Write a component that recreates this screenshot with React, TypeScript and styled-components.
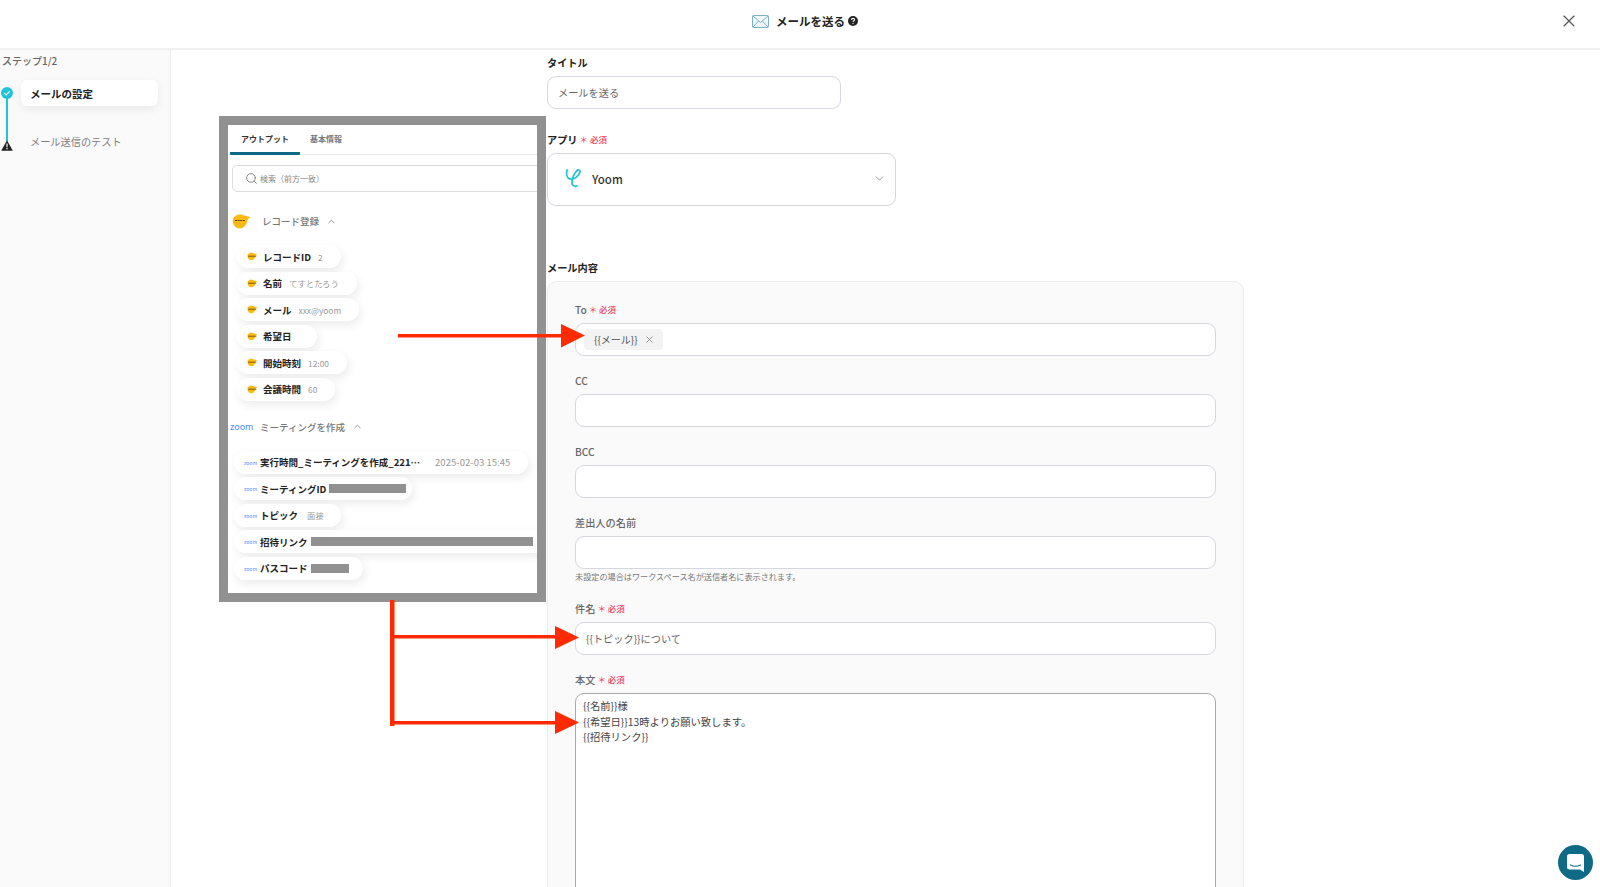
import styled, { createGlobalStyle } from "styled-components";
import { ChevronDown, ChevronUp, Search, X } from "lucide-react";

const GlobalStyle = createGlobalStyle`
  html, body {
    margin: 0;
    padding: 0;
    background: #fff;
    font-family: "Noto Sans CJK JP", "Noto Sans", sans-serif;
    color: #222;
  }
  * {
    box-sizing: border-box;
  }
`;

const Page = styled.div`
  position: relative;
  width: 1600px;
  height: 887px;
  overflow: hidden;
  display: flex;
  flex-direction: column;
`;

const Header = styled.header`
  position: relative;
  height: 50px;
  flex: none;
  display: flex;
  align-items: center;
  justify-content: center;
  padding: 0 0 6px 10px;
  border-bottom: 2px solid #f1f1f1;
`;

const HeaderTitle = styled.h1`
  margin: 0 0 0 7px;
  font-size: 11.5px;
  font-weight: 700;
  color: #222;
`;

const CloseButton = styled.button`
  position: absolute;
  right: 21px;
  top: 11px;
  padding: 0;
  border: 0;
  background: none;
  color: #555;
  display: flex;
`;

const Body = styled.div`
  flex: 1;
  display: flex;
  min-height: 0;
`;

const Sidebar = styled.aside`
  width: 171px;
  flex: none;
  padding: 3px 12px 0 2px;
  background: #fafafa;
  border-right: 1px solid #ececec;
`;

const StepCount = styled.div`
  font-size: 10px;
  line-height: 16px;
  font-weight: 500;
  color: #666;
  margin-bottom: 11px;
`;

const StepList = styled.div`
  position: relative;
  display: flex;
  flex-direction: column;
  gap: 22px;
  padding-left: 19px;
`;

const StepRail = styled.div`
  position: absolute;
  left: 4px;
  top: 15px;
  width: 2px;
  height: 46px;
  background: #1fc4d9;
`;

const StepDot = styled.span`
  position: absolute;
  left: -1px;
  top: 7px;
  display: flex;
`;

const StepWarn = styled.span`
  position: absolute;
  left: -1px;
  top: 60px;
  display: flex;
`;

const Step = styled.div<{ $active?: boolean }>`
  height: ${(p) => (p.$active ? "26px" : "27px")};
  display: flex;
  align-items: center;
  padding-left: 9px;
  border-radius: 6px;
  font-size: ${(p) => (p.$active ? "10.5px" : "10.2px")};
  font-weight: ${(p) => (p.$active ? 700 : 400)};
  color: ${(p) => (p.$active ? "#222" : "#808080")};
  background: ${(p) => (p.$active ? "#fff" : "transparent")};
  box-shadow: ${(p) => (p.$active ? "0 3px 10px rgba(0,0,0,0.07)" : "none")};
`;

const Main = styled.main`
  flex: 1;
  padding: 4px 0 0 376px;
`;

const Label = styled.label<{ $muted?: boolean }>`
  display: flex;
  align-items: center;
  height: 16px;
  margin-bottom: 6px;
  font-size: 10.2px;
  font-weight: ${(p) => (p.$muted ? 500 : 700)};
  color: ${(p) => (p.$muted ? "#666" : "#222")};
`;

const Required = styled.span`
  margin-left: 2px;
  font-size: 8.5px;
  font-weight: 500;
  color: #f0405c;
`;

const Field = styled.div`
  margin-bottom: 16px;
`;

const TitleField = styled(Field)`
  width: 294px;
  margin-bottom: 22px;
`;

const Input = styled.div`
  display: flex;
  align-items: center;
  height: 33px;
  padding: 0 10px;
  background: #fff;
  border: 1px solid #d4d8de;
  border-radius: 9px;
  font-size: 10.2px;
  color: #666;
`;

const SelectBox = styled.div`
  display: flex;
  align-items: center;
  width: 349px;
  height: 53px;
  margin-bottom: 53px;
  padding: 0 9px 2px 17px;
  background: #fff;
  border: 1px solid #d4d8de;
  border-radius: 9px;
  font-size: 11.5px;
  font-weight: 500;
  color: #333;
`;

const SelectName = styled.span`
  flex: 1;
  margin-left: 10px;
`;

const ContentPanel = styled.section`
  width: 697px;
  height: 700px;
  padding: 19px 27px 0;
  background: #fafafa;
  border: 1px solid #ececec;
  border-radius: 10px;
`;

const Tag = styled.span`
  display: flex;
  align-items: center;
  gap: 6px;
  height: 21px;
  margin-left: -2px;
  padding: 0 8px 0 10px;
  background: #f3f3f3;
  border-radius: 4px;
  font-size: 10px;
  color: #555;
`;

const Hint = styled.div`
  height: 16px;
  margin-bottom: 15px;
  font-size: 8.15px;
  line-height: 16px;
  color: #777;
`;

const BodyText = styled.div`
  height: 400px;
  padding: 4px 7px;
  background: #fff;
  border: 1px solid #aaa;
  border-radius: 9px 9px 0 0;
  font-size: 10.3px;
  line-height: 15.5px;
  color: #444;
`;

const Shot = styled.div`
  position: absolute;
  left: 219px;
  top: 116px;
  width: 327px;
  height: 486px;
  padding-top: 0;
  background: #fff;
  border: 9px solid #919191;
  overflow: hidden;
`;

const Tabs = styled.div`
  display: flex;
  height: 30px;
  border-bottom: 1px solid #e8e8e8;
  padding-left: 2px;
`;

const Tab = styled.div<{ $active?: boolean }>`
  width: ${(p) => (p.$active ? "70px" : "auto")};
  margin-right: 10px;
  margin-bottom: -1px;
  padding-bottom: 1px;
  display: flex;
  align-items: center;
  justify-content: center;
  font-size: 8px;
  font-weight: 700;
  color: ${(p) => (p.$active ? "#333" : "#777")};
  border-bottom: 3px solid ${(p) => (p.$active ? "#0e6a85" : "transparent")};
  border-radius: 0 0 1px 1px;
`;

const SearchBox = styled.div`
  display: flex;
  align-items: center;
  gap: 2px;
  height: 27px;
  width: 320px;
  margin: 10px 0 0 4px;
  padding-left: 12px;
  border: 1px solid #dcdcdc;
  border-radius: 5px;
  font-size: 8px;
  color: #888;
`;

const SectionHead = styled.div<{ $zoom?: boolean }>`
  display: flex;
  align-items: center;
  height: 20px;
  margin: ${(p) => (p.$zoom ? "16px 0 14px 2px" : "19px 0 14px 4px")};
  font-size: 9.5px;
  font-weight: 500;
  color: #777;
`;

const SectionName = styled.span`
  margin: 0 7px 0 10px;
`;

const ChipList = styled.div<{ $zoom?: boolean }>`
  display: flex;
  flex-direction: column;
  align-items: flex-start;
  gap: 3.5px;
  margin-left: ${(p) => (p.$zoom ? "6px" : "9px")};
`;

const Chip = styled.div<{ $end?: number }>`
  display: flex;
  align-items: center;
  height: 23px;
  padding: 0 ${(p) => p.$end ?? 14}px 0 10px;
  background: #fff;
  border-radius: 12px;
  box-shadow: 2px 4px 10px rgba(0, 0, 0, 0.08);
  white-space: nowrap;
`;

const ChipName = styled.span<{ $zoom?: boolean }>`
  margin-left: ${(p) => (p.$zoom ? "4px" : "5px")};
  margin-right: ${(p) => (p.$zoom ? "0" : "7px")};
  font-size: 9.5px;
  font-weight: 700;
  color: #222;
`;

const ChipValue = styled.span`
  margin-left: 9px;
  font-size: 8.4px;
  color: #999;
`;

const RecordValue = styled(ChipValue)`
  margin-left: 0;
`;

const DateValue = styled(ChipValue)`
  margin-left: 15px;
  font-size: 9.6px;
`;

const Redacted = styled.span<{ $w: number }>`
  width: ${(p) => p.$w}px;
  height: 9px;
  margin-left: 3px;
  background: #919191;
`;

const ZoomWord = styled.span<{ $big?: boolean }>`
  width: ${(p) => (p.$big ? "20px" : "12px")};
  font-size: ${(p) => (p.$big ? "9px" : "5px")};
  font-weight: 400;
  color: #4a8cff;
`;

const Fab = styled.div`
  position: absolute;
  left: 1558px;
  top: 845px;
  width: 35px;
  height: 35px;
  display: flex;
  align-items: center;
  justify-content: center;
  border-radius: 50%;
  background: #0e6a85;
`;

const ArrowLayer = styled.svg`
  position: absolute;
  left: 0;
  top: 0;
  pointer-events: none;
`;

const MailIcon = () => (
  <svg width="17" height="13" viewBox="0 0 17 13" fill="none" stroke="#7fb0c4" strokeWidth="1">
    <rect x="0.5" y="0.5" width="16" height="12" rx="1" fill="#eef7fb" />
    <path d="M1 1l7.5 6.5L16 1M1 12l5.5-6M16 12l-5.5-6" />
  </svg>
);

const HelpIcon = () => (
  <svg width="10" height="10" viewBox="0 0 10 10" style={{ marginLeft: 3 }}>
    <circle cx="5" cy="5" r="5" fill="#222" />
    <path d="M3.5 3.9c0-2 3.1-2 3.1-.1 0 1.1-1.6 1.1-1.6 2.3" fill="none" stroke="#fff" strokeWidth="1.1" />
    <circle cx="5" cy="7.6" r=".7" fill="#fff" />
  </svg>
);

const CheckDot = () => (
  <svg width="12" height="12" viewBox="0 0 12 12">
    <circle cx="6" cy="6" r="6" fill="#1fc4d9" />
    <path d="M3.4 6.2l1.8 1.7 3.4-3.5" fill="none" stroke="#fff" strokeWidth="1.1" />
  </svg>
);

const WarnIcon = () => (
  <svg width="12" height="11" viewBox="0 0 12 11">
    <path d="M6 .3l5.8 10.4H.2z" fill="#222" />
    <path d="M6 3.6v3.6M6 8v1.2" stroke="#fff" strokeWidth="1.2" />
  </svg>
);

const YoomLogo = () => (
  <svg width="17" height="21" viewBox="0 0 17 21" fill="none" stroke="#1fc4d9" strokeWidth="1.8" strokeLinecap="round">
    <path d="M2 2c-1 4 0 8 3 9 4 1 9-3 10-7 .5-2-2-3-3.500-1-2.500 3-4.500 8-4.500 12 0 2 2 4 5 3" />
  </svg>
);

const BlobLogo = ({ big }: { big?: boolean }) =>
  big ? (
    <svg width="20" height="15" viewBox="0 0 20 15">
      <path d="M1 5c1-3 5-5 8-4.500 3 .5 5 2 10 2.500-2 1-3 1.500-3.500 3.500C14.500 10.500 12 14.500 8 14.500 3 14.500 0 9.500 1 5z" fill="#fdb913" />
      <path d="M3 6.500h10" stroke="#5a4100" strokeWidth="1" strokeDasharray="2 .6" />
    </svg>
  ) : (
    <svg width="11" height="9" viewBox="0 0 20 15">
      <path d="M1 5c1-3 5-5 8-4.500 3 .5 5 2 10 3-2 1-3 1.500-3.500 3.500C14.500 10.500 12 14.500 8 14.500 3 14.500 0 9.500 1 5z" fill="#fdb913" />
      <path d="M2 7h15" stroke="#5a4100" strokeWidth="1.400" />
    </svg>
  );

const FabIcon = () => (
  <svg width="17" height="18" viewBox="0 0 17 18">
    <path d="M2.500 0h12A2.500 2.500 0 0 1 17 2.500V18l-4-2.500H2.500A2.500 2.500 0 0 1 0 13V2.500A2.500 2.500 0 0 1 2.500 0z" fill="#fff" />
    <path d="M3.500 11c3 1.500 7 1.500 10 0" fill="none" stroke="#0e6a85" strokeWidth="1.100" strokeLinecap="round" />
  </svg>
);

const recordChips = [
  { name: "レコードID", value: "2" },
  { name: "名前", value: "てすとたろう" },
  { name: "メール", value: "xxx@yoom" },
  { name: "希望日", value: "" },
  { name: "開始時刻", value: "12:00" },
  { name: "会議時間", value: "60" },
];

function App() {
  return (
    <Page>
      <GlobalStyle />
      <Header>
        <MailIcon />
        <HeaderTitle>メールを送る</HeaderTitle>
        <HelpIcon />
        <CloseButton>
          <X size={20} strokeWidth={1.4} />
        </CloseButton>
      </Header>
      <Body>
        <Sidebar>
          <StepCount>ステップ1/2</StepCount>
          <StepList>
            <StepRail />
            <StepDot>
              <CheckDot />
            </StepDot>
            <StepWarn>
              <WarnIcon />
            </StepWarn>
            <Step $active>メールの設定</Step>
            <Step>メール送信のテスト</Step>
          </StepList>
        </Sidebar>
        <Main>
          <TitleField>
            <Label>タイトル</Label>
            <Input>メールを送る</Input>
          </TitleField>
          <Label>
            アプリ<Required>＊ 必須</Required>
          </Label>
          <SelectBox>
            <YoomLogo />
            <SelectName>Yoom</SelectName>
            <ChevronDown size={13} color="#777" strokeWidth={1.4} />
          </SelectBox>
          <Label>メール内容</Label>
          <ContentPanel>
            <Field>
              <Label $muted>
                To<Required>＊ 必須</Required>
              </Label>
              <Input>
                <Tag>
                  {"{{メール}}"}
                  <X size={11} color="#666" strokeWidth={1.4} />
                </Tag>
              </Input>
            </Field>
            <Field>
              <Label $muted>CC</Label>
              <Input />
            </Field>
            <Field>
              <Label $muted>BCC</Label>
              <Input />
            </Field>
            <Label $muted>差出人の名前</Label>
            <Input />
            <Hint>未設定の場合はワークスペース名が送信者名に表示されます。</Hint>
            <Field>
              <Label $muted>
                件名<Required>＊ 必須</Required>
              </Label>
              <Input>{"{{トピック}}について"}</Input>
            </Field>
            <Label $muted>
              本文<Required>＊ 必須</Required>
            </Label>
            <BodyText>
              {"{{名前}}様"}
              <br />
              {"{{希望日}}13時よりお願い致します。"}
              <br />
              {"{{招待リンク}}"}
            </BodyText>
          </ContentPanel>
        </Main>
      </Body>

      <Shot>
        <Tabs>
          <Tab $active>アウトプット</Tab>
          <Tab>基本情報</Tab>
        </Tabs>
        <SearchBox>
          <Search size={13} color="#666" strokeWidth={1.4} />
          検索（前方一致）
        </SearchBox>
        <SectionHead>
          <BlobLogo big />
          <SectionName>レコード登録</SectionName>
          <ChevronUp size={11} strokeWidth={1.6} />
        </SectionHead>
        <ChipList>
          {recordChips.map((c) => (
            <Chip key={c.name} $end={18}>
              <BlobLogo />
              <ChipName>{c.name}</ChipName>
              {c.value && <RecordValue>{c.value}</RecordValue>}
            </Chip>
          ))}
        </ChipList>
        <SectionHead $zoom>
          <ZoomWord $big>zoom</ZoomWord>
          <SectionName>ミーティングを作成</SectionName>
          <ChevronUp size={11} strokeWidth={1.6} />
        </SectionHead>
        <ChipList $zoom>
          <Chip $end={18}>
            <ZoomWord>zoom</ZoomWord>
            <ChipName $zoom>実行時間_ミーティングを作成_221⋯</ChipName>
            <DateValue>2025-02-03 15:45</DateValue>
          </Chip>
          <Chip $end={6}>
            <ZoomWord>zoom</ZoomWord>
            <ChipName $zoom>ミーティングID</ChipName>
            <Redacted $w={77} />
          </Chip>
          <Chip $end={17}>
            <ZoomWord>zoom</ZoomWord>
            <ChipName $zoom>トピック</ChipName>
            <ChipValue>面接</ChipValue>
          </Chip>
          <Chip>
            <ZoomWord>zoom</ZoomWord>
            <ChipName $zoom>招待リンク</ChipName>
            <Redacted $w={222} />
          </Chip>
          <Chip>
            <ZoomWord>zoom</ZoomWord>
            <ChipName $zoom>パスコード</ChipName>
            <Redacted $w={38} />
          </Chip>
        </ChipList>
      </Shot>

      <ArrowLayer width="1600" height="887" viewBox="0 0 1600 887">
        <g fill="#ff2a00">
          <rect x="398" y="334" width="165" height="3.500" />
          <path d="M561 324l24 11.500-24 12z" />
          <rect x="390" y="600" width="4.500" height="126" />
          <rect x="392" y="635" width="165" height="3.500" />
          <path d="M555 626l24 11.500-24 11.500z" />
          <rect x="392" y="721" width="165" height="3.500" />
          <path d="M555 711l24 11.500-24 11.500z" />
        </g>
      </ArrowLayer>

      <Fab>
        <FabIcon />
      </Fab>
    </Page>
  );
}

export default App;
